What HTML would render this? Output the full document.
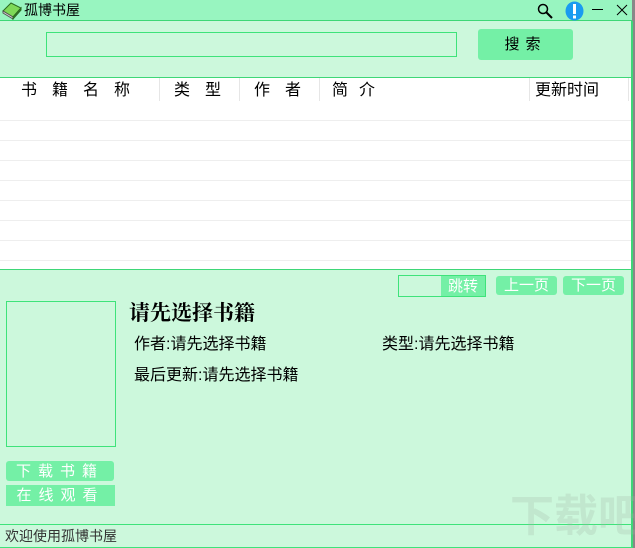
<!DOCTYPE html>
<html><head><meta charset="utf-8"><style>
*{margin:0;padding:0;box-sizing:border-box}
body{width:635px;height:548px;position:relative;overflow:hidden;background:#ccf8dc;font-family:"Liberation Sans","Noto Sans CJK SC",sans-serif;color:#000}
.a{position:absolute}
.t{font-size:15px;white-space:nowrap;line-height:1}
</style></head><body>
<div class="a" style="left:0;top:0;width:635px;height:21px;background:#98f5c0;border-bottom:1px solid #3ed777"></div>
<svg class="a" style="left:2px;top:2px" width="20" height="18" viewBox="0 0 20 18"><path d="M1 9 L9 1 L19 6 L11 15 Z" fill="#7ed957" stroke="#2a6a20"/><path d="M1 9 L11 15 L11 17 L1 11 Z" fill="#ddd" stroke="#555"/><path d="M11 15 L19 6 L19 8 L11 17Z" fill="#4a8a30" stroke="#2a6a20"/></svg>
<div class="a t" style="left:24px;top:3px;font-size:14px">孤博书屋</div>
<svg class="a" style="left:536px;top:2px" width="18" height="18"><circle cx="7" cy="7" r="4.5" fill="none" stroke="#000" stroke-width="1.5"/><line x1="10" y1="10" x2="16" y2="16" stroke="#000" stroke-width="2"/></svg>
<svg class="a" style="left:565px;top:1px" width="19" height="20"><ellipse cx="9.5" cy="10" rx="9" ry="9.5" fill="#1a9bf0"/><rect x="8" y="3" width="3" height="10" fill="#fff"/><rect x="8" y="14.5" width="3" height="3" fill="#fff"/></svg>
<div class="a" style="left:592px;top:9px;width:11px;height:1px;background:#000"></div>
<svg class="a" style="left:616px;top:4px" width="12" height="12"><path d="M1 1L11 11M11 1L1 11" stroke="#000"/></svg>
<div class="a" style="left:46px;top:32px;width:411px;height:25px;border:1px solid #3ee37a;background:#ccf8dc"></div>
<div class="a t" style="left:478px;top:29px;width:95px;height:31px;background:#74f0a6;border-radius:3px;padding-top:8px;text-align:center;letter-spacing:6px">搜索</div>
<div class="a" style="left:0;top:77px;width:632px;height:192px;background:#fff;border-top:1px solid #3ed777"></div>
<div class="a" style="left:632px;top:0;width:3px;height:548px;background:#888"></div>
<div class="a" style="left:631px;top:21px;width:2px;height:527px;background:#3ed777"></div>
<div class="a t" style="left:21px;top:83px;font-size:16px;letter-spacing:15px">书籍名称</div>
<div class="a t" style="left:174px;top:83px;font-size:16px;letter-spacing:15px">类型</div>
<div class="a t" style="left:254px;top:83px;font-size:16px;letter-spacing:15px">作者</div>
<div class="a t" style="left:332px;top:83px;font-size:16px;letter-spacing:11px">简介</div>
<div class="a t" style="left:535px;top:83px;font-size:16px">更新时间</div>
<div class="a" style="left:159px;top:78px;width:1px;height:191px;background:#e6e6e6"></div>
<div class="a" style="left:239px;top:78px;width:1px;height:191px;background:#e6e6e6"></div>
<div class="a" style="left:319px;top:78px;width:1px;height:191px;background:#e6e6e6"></div>
<div class="a" style="left:529px;top:78px;width:1px;height:191px;background:#e6e6e6"></div>
<div class="a" style="left:628px;top:78px;width:1px;height:191px;background:#e6e6e6"></div>
<div class="a" style="left:0;top:101px;width:631px;height:168px;background:repeating-linear-gradient(#fff 0 19px,#eee 19px 20px)"></div>
<div class="a" style="left:0;top:269px;width:632px;height:1px;background:#3ed777"></div>
<div class="a" style="left:398px;top:275px;width:88px;height:22px;border:1px solid #3ee37a"></div>
<div class="a t" style="left:441px;top:276px;width:44px;height:20px;background:#74f0a6;color:#fff;padding-top:3px;text-align:center">跳转</div>
<div class="a t" style="left:496px;top:276px;width:61px;height:19px;background:#74f0a6;border-radius:3px;color:#fff;padding-top:2px;text-align:center">上一页</div>
<div class="a t" style="left:563px;top:276px;width:61px;height:19px;background:#74f0a6;border-radius:3px;color:#fff;padding-top:2px;text-align:center">下一页</div>
<div class="a" style="left:6px;top:301px;width:110px;height:146px;border:1px solid #3ee37a"></div>
<div class="a t" style="left:129px;top:303px;font-size:21px;font-weight:bold;font-family:'Liberation Serif','Noto Serif CJK SC',serif">请先选择书籍</div>
<div class="a t" style="left:134px;top:337px;font-size:16px">作者:请先选择书籍</div>
<div class="a t" style="left:382px;top:337px;font-size:16px">类型:请先选择书籍</div>
<div class="a t" style="left:134px;top:368px;font-size:16px">最后更新:请先选择书籍</div>
<div class="a t" style="left:6px;top:461px;width:108px;height:20px;background:#74f0a6;border-radius:3px;color:#fff;padding-top:3px;text-align:center;letter-spacing:7px">下载书籍</div>
<div class="a t" style="left:6px;top:485px;width:109px;height:21px;background:#74f0a6;color:#fff;padding-top:3px;text-align:center;letter-spacing:7px">在线观看</div>
<div class="a" style="left:0;top:524px;width:632px;height:1px;background:#3ee37a"></div>
<div class="a t" style="left:5px;top:529px;font-size:14px;color:#333">欢迎使用孤博书屋</div>
<div class="a" style="left:0;top:547px;width:632px;height:1px;background:#3ee37a"></div>
<div class="a t" style="left:510px;top:495px;font-size:44px;color:rgba(160,180,165,.25);font-weight:bold">下载吧</div>
</body></html>
